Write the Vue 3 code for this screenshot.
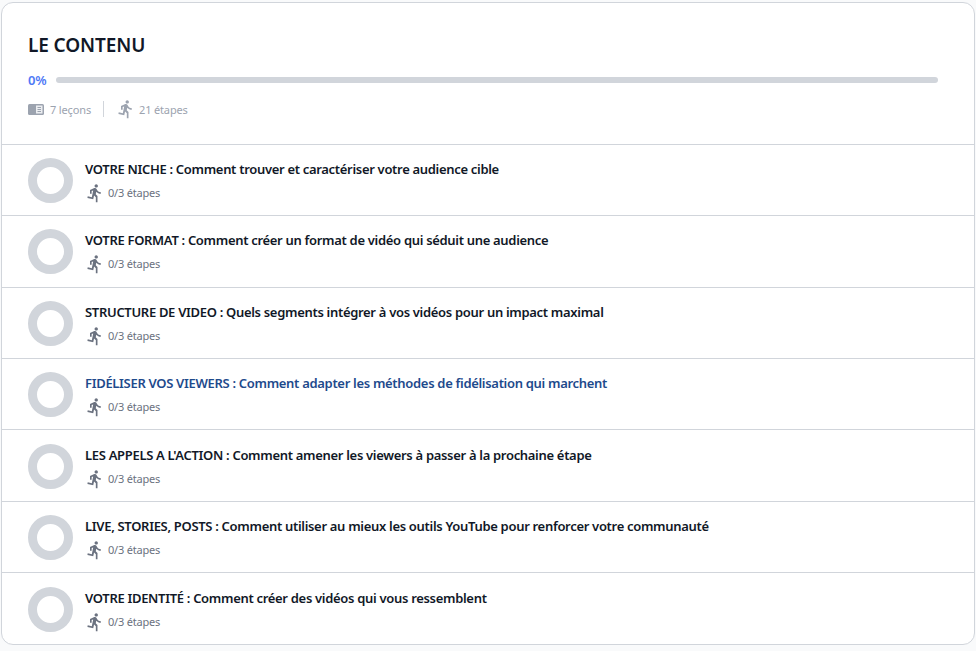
<script setup>
const lessons = [
  { title: 'VOTRE NICHE : Comment trouver et caractériser votre audience cible' },
  { title: 'VOTRE FORMAT : Comment créer un format de vidéo qui séduit une audience' },
  { title: 'STRUCTURE DE VIDEO : Quels segments intégrer à vos vidéos pour un impact maximal' },
  { title: 'FIDÉLISER VOS VIEWERS : Comment adapter les méthodes de fidélisation qui marchent', active: true },
  { title: "LES APPELS A L'ACTION : Comment amener les viewers à passer à la prochaine étape" },
  { title: 'LIVE, STORIES, POSTS : Comment utiliser au mieux les outils YouTube pour renforcer votre communauté' },
  { title: 'VOTRE IDENTITÉ : Comment créer des vidéos qui vous ressemblent' }
]
const runner = 'M13.49 5.48c1.1 0 2-.9 2-2s-.9-2-2-2-2 .9-2 2 .9 2 2 2zm-3.6 13.9l1-4.4 2.1 2v6h2v-7.5l-2.1-2 .6-3c1.3 1.5 3.3 2.5 5.5 2.5v-2c-1.9 0-3.5-1-4.3-2.4l-1-1.6c-.4-.6-1-1-1.7-1-.3 0-.5.1-.8.1l-5.2 2.2v4.7h2v-3.4l1.8-.7-1.6 8.1-4.9-1-.4 2 7 1.4z'
</script>

<template>
  <div class="page">
    <section class="card">
      <header class="head">
        <h2 class="title">LE CONTENU</h2>
        <div class="progress">
          <span class="pct">0%</span>
          <div class="track"></div>
        </div>
        <div class="meta">
          <span class="meta-item">
            <svg class="book" width="16" height="11" viewBox="0 0 16 11">
              <rect width="16" height="11" rx="1.5" fill="#9ca3af" />
              <rect x="8" y="1.5" width="6.5" height="8" fill="#eceef1" />
              <path d="M9.5 3.5h3.5M9.5 5.5h3.5M9.5 7.5h3.5" stroke="#9ca3af" stroke-width="1" />
            </svg>
            7 leçons
          </span>
          <span class="sep"></span>
          <span class="meta-item runner-item">
            <svg width="20" height="20" viewBox="0 0 24 24"><path :d="runner" fill="#9ca3af" /></svg>
            21 étapes
          </span>
        </div>
      </header>
      <ul class="list">
        <li v-for="l in lessons" :key="l.title" class="row">
          <span class="ring"></span>
          <div class="body">
            <div class="name" :class="{ active: l.active }">{{ l.title }}</div>
            <div class="steps">
              <svg width="20" height="20" viewBox="0 0 24 24"><path :d="runner" fill="#6b7280" /></svg>
              <span>0/3 étapes</span>
            </div>
          </div>
        </li>
      </ul>
    </section>
  </div>
</template>

<style scoped>
.page {
  width: 976px;
  height: 651px;
  box-sizing: border-box;
  padding: 2px 1px 0 1px;
  background: #f9fafb;
  font-family: "Noto Sans", sans-serif;
  overflow: hidden;
}
.card {
  width: 974px;
  box-sizing: border-box;
  background: #fff;
  border: 1px solid #d1d5db;
  border-radius: 12px;
  overflow: hidden;
}
.head {
  height: 140.6px;
  box-sizing: border-box;
  padding: 30px 36px 0 26px;
}
.title {
  margin: 0;
  font-size: 19px;
  line-height: 24px;
  font-weight: 600;
  letter-spacing: -0.1px;
  color: #111827;
}
.progress {
  display: flex;
  align-items: center;
  gap: 10px;
  margin-top: 13px;
  height: 20px;
}
.pct {
  font-size: 13px;
  font-weight: 600;
  letter-spacing: -0.2px;
  color: #4f79f6;
}
.track {
  flex: 1;
  height: 6px;
  border-radius: 3px;
  background: #d1d5db;
}
.meta {
  display: flex;
  align-items: center;
  margin-top: 9px;
  font-size: 11px;
  letter-spacing: -0.15px;
  color: #9ca3af;
}
.meta-item {
  display: flex;
  align-items: center;
  gap: 6px;
}
.runner-item {
  gap: 3px;
}
.sep {
  width: 1px;
  height: 16px;
  background: #d1d5db;
  margin: 0 12px;
}
.list {
  list-style: none;
  margin: 0;
  padding: 0;
}
.row {
  display: flex;
  align-items: center;
  gap: 12px;
  height: 71.48px;
  box-sizing: border-box;
  padding-left: 26px;
  border-top: 1px solid #d1d5db;
}
.ring {
  width: 45px;
  height: 45px;
  margin-top: 1px;
  box-sizing: border-box;
  border-radius: 50%;
  border: 9.5px solid #d1d5db;
  flex: none;
}
.body {
  padding-top: 2px;
}
.name {
  font-size: 13px;
  line-height: 20px;
  font-weight: 600;
  letter-spacing: -0.31px;
  color: #111827;
}
.name.active {
  color: #1e4a8c;
}
.steps {
  display: flex;
  align-items: center;
  gap: 3px;
  margin-top: 4px;
  font-size: 11px;
  line-height: 20px;
  letter-spacing: -0.2px;
  color: #6b7280;
}
</style>

<style>
body { background: #f9fafb; }
</style>
